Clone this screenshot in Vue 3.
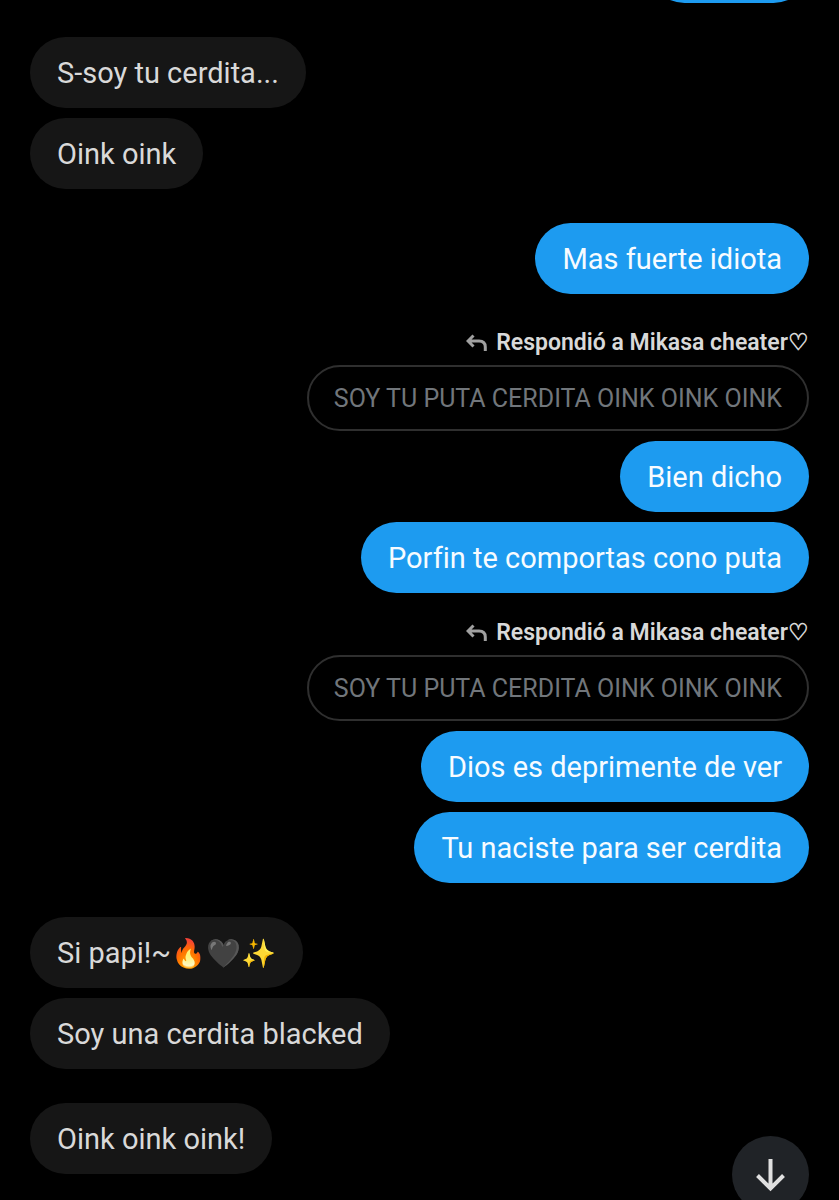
<script setup>
import { ref } from 'vue'

const groups = ref([
    {
        mine: true,
        items: [{ cut: true, text: "" }]
    },
    {
        mine: false,
        items: [
            { text: "S-soy tu cerdita..." },
            { text: "Oink oink" }
        ]
    },
    {
        mine: true,
        items: [{ text: "Mas fuerte idiota" }]
    },
    {
        mine: true,
        items: [
            { text: "Bien dicho", quote: "SOY TU PUTA CERDITA OINK OINK OINK" },
            { text: "Porfin te comportas cono puta" },
            { text: "Dios es deprimente de ver", quote: "SOY TU PUTA CERDITA OINK OINK OINK" },
            { text: "Tu naciste para ser cerdita" }
        ]
    },
    {
        mine: false,
        items: [
            { text: "Si papi!~", emoji: "🔥🖤✨" },
            { text: "Soy una cerdita blacked" }
        ]
    },
    {
        mine: false,
        items: [{ text: "Oink oink oink!" }]
    }
])

function scrollDown(){
    window.scrollTo({ top: document.body.scrollHeight, behavior: "smooth" })
}
</script>

<template>
    <main>
        <section
            v-for="(group, g) in groups"
            :key="g"
            class="group"
            :class="group.mine ? 'mine' : ''">
            <div v-for="(item, i) in group.items" :key="i" class="message">
                <template v-if="item.quote">
                    <div class="reply" :class="i > 0 ? 'reply-next' : ''">
                        <svg class="reply-icon" viewBox="0 0 21 18" aria-hidden="true">
                            <path d="M7.5 1.5 L2 7 L7.5 12.5 M2 7 H13 Q19.3 7 19.3 13 V17" />
                        </svg>
                        <span>Respondió a Mikasa cheater♡</span>
                    </div>
                    <div class="quote">{{ item.quote }}</div>
                </template>
                <div class="bubble" :class="item.cut ? 'cut' : ''">{{ item.text }}<span v-if="item.emoji" class="emoji">{{ item.emoji }}</span></div>
            </div>
        </section>

        <button class="down" aria-label="Scroll down" @click="scrollDown">
            <svg viewBox="0 0 33 36" aria-hidden="true">
                <path d="M16.5 2 V31 M3.5 18.5 L16.5 31.5 L29.5 18.5" />
            </svg>
        </button>
    </main>
</template>

<style>
body {
    margin: 0;
    background-color: #000;
}
</style>

<style scoped>
main {
    min-height: 100vh;
    box-sizing: border-box;
    padding: 0 30px 25px;
    overflow: hidden;

    display: flex;
    flex-direction: column;
    gap: 34px;

    background-color: #000;
    color: #d9d9d9;
    font-family: Roboto, "Liberation Sans", sans-serif;
    font-variant-ligatures: none;
}

.group {
    display: flex;
    flex-direction: column;
    gap: 10px;
}

.message {
    display: flex;
    flex-direction: column;
    align-items: flex-start;
}

.mine .message {
    align-items: flex-end;
}

.bubble {
    height: 71px;
    box-sizing: border-box;
    padding: 0 27px;
    border-radius: 36px;
    background-color: #161616;
    font-size: 29px;
    line-height: 73px;
    white-space: nowrap;
}

.mine .bubble {
    background-color: #1d9bf0;
    color: #f7fbff;
}

.cut {
    width: 160px;
    margin-top: -68px;
}

.emoji {
    font-size: 28px;
}

.reply {
    display: flex;
    align-items: center;
    gap: 9px;
    margin-bottom: 7px;
    font-size: 23px;
    font-weight: 600;
    line-height: 30px;
}

.reply-next {
    margin-top: 15px;
}

.reply-icon {
    width: 21px;
    height: 18px;
    fill: none;
    stroke: #a0a0a0;
    stroke-width: 3;
}

.quote {
    height: 66px;
    box-sizing: border-box;
    margin-bottom: 10px;
    padding: 0 25px;
    border: 2px solid #2f2f2f;
    border-radius: 33px;
    color: #71767b;
    font-size: 25px;
    line-height: 64px;
    white-space: nowrap;
}

.down {
    position: fixed;
    right: 30px;
    bottom: -13px;
    width: 77px;
    height: 77px;
    padding: 0;
    border: none;
    border-radius: 50%;
    background-color: #202327;

    display: flex;
    justify-content: center;
    align-items: center;
}

.down svg {
    width: 33px;
    height: 36px;
    fill: none;
    stroke: #e0e0e0;
    stroke-width: 4;
}
</style>
